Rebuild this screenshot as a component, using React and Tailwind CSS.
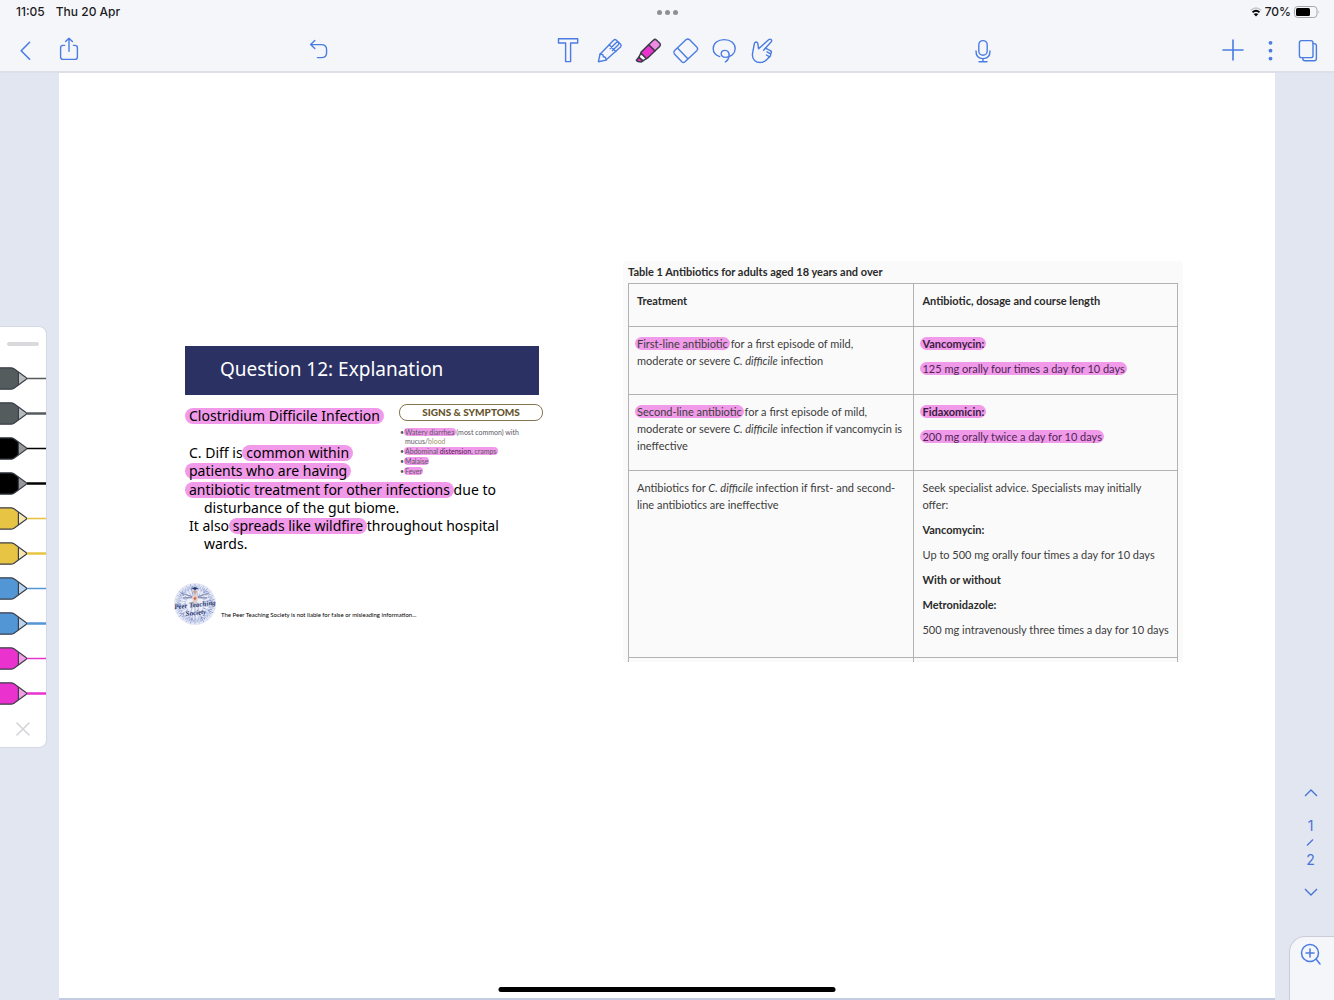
import React from 'react'
import clsx from 'clsx'

const PENS = [
  { key: 'grey-thin', label: 'Grey pen, thin', color: '#545c5e', tip: '#b9bcbd', line: 1.6 },
  { key: 'grey-thick', label: 'Grey pen, thick', color: '#545c5e', tip: '#b9bcbd', line: 2.6 },
  { key: 'black-thin', label: 'Black pen, thin', color: '#000000', tip: '#999999', line: 1.6 },
  { key: 'black-thick', label: 'Black pen, thick', color: '#000000', tip: '#999999', line: 2.6 },
  { key: 'yellow-thin', label: 'Yellow pen, thin', color: '#e8c445', tip: '#f8e8b0', line: 1.6 },
  { key: 'yellow-thick', label: 'Yellow pen, thick', color: '#e8c445', tip: '#f8e8b0', line: 2.6 },
  { key: 'blue-thin', label: 'Blue pen, thin', color: '#5296d6', tip: '#b9d5ef', line: 1.6 },
  { key: 'blue-thick', label: 'Blue pen, thick', color: '#5296d6', tip: '#b9d5ef', line: 2.6 },
  { key: 'pink-thin', label: 'Pink pen, thin', color: '#ea32cf', tip: '#f59fe6', line: 1.6 },
  { key: 'pink-thick', label: 'Pink pen, thick', color: '#ea32cf', tip: '#f59fe6', line: 2.6 },
]

const TOOLS = [
  {
    key: 'text',
    label: 'Text',
    icon: <path d="M8.5 6.7H27.7V11H20.6V29.6H15.6V11H8.5Z" />,
  },
  {
    key: 'pen',
    label: 'Pen',
    icon: (
      <>
        <path d="M9.4 29.7L11 22.3L24.6 8.2Q26 6.9 27.4 8.2L31.6 12.2Q32.8 13.5 31.5 15L17 28.1Z" />
        <path d="M11 22.3Q14.5 21.8 14.3 24.8Q17.2 24.6 17 28.1" />
        <path d="M20.2 12.8L26.8 19.4M21.2 16.4L27.4 10.4Q28.6 9.6 29.5 10.5T29.4 12.7L23.4 18.4" />
      </>
    ),
  },
  {
    key: 'highlighter',
    label: 'Highlighter',
    icon: (
      <g stroke="#3b3c48" strokeWidth="1.5">
        <path d="M20.6 12.8L25.6 8Q27 6.8 28.4 8L31.8 11.3Q33 12.7 31.8 14.2L26.9 19Z" fill="#f08be4" />
        <path d="M20.6 12.8L26.9 19L19.4 26.2Q18.4 26.8 17.5 26L13.2 21.8Q12.5 20.9 13.2 20.1Z" fill="#ea32cf" />
        <path d="M12.9 21.2L10.8 25.3L14.8 28.9L18.4 26.7Z" fill="#ffffff" />
        <path d="M10.8 25.3L8.4 28.3L10 29.6L13.4 30L14.8 28.9Z" fill="#ea32cf" />
      </g>
    ),
  },
  {
    key: 'eraser',
    label: 'Eraser',
    icon: (
      <>
        <path d="M19.2 7.6Q20.8 6.2 22.4 7.6L30 15.2Q31.3 16.8 30 18.4L18 29.8Q16.4 31.2 14.8 29.8L7.4 22Q6.1 20.4 7.4 18.8Z" />
        <path d="M10.7 16.2L20.8 26.8" />
      </>
    ),
  },
  {
    key: 'lasso',
    label: 'Lasso',
    icon: (
      <path d="M13.7 24.6C9 23.2 7.2 19.6 7.2 16.6C7.2 11 12 7.6 18.2 7.6S29.2 11 29.2 16.6C29.2 21.4 25 25.4 19.5 25.4C16.6 25.4 15.2 23.7 15.2 21.8C15.2 19.8 16.9 18.4 19 18.4C22 18.4 23.5 20.8 23 24C22.7 27 21.5 28.8 19.3 30" />
    ),
  },
  {
    key: 'hand',
    label: 'Finger mode',
    icon: (
      <>
        <path d="M20.4 16.2L26 10Q27.2 8.8 26.2 7.6Q25 6.6 23.6 7.8L13.6 16.8L12.8 11.4Q12.4 10 11 10Q9.6 10.2 9.3 11.8L7.5 21.6Q7 26 9.6 28.4Q12 30.7 16.2 30.4Q19.6 30.2 21.6 27.8L24.6 24.8" />
        <path d="M20.4 16.2L25.8 18.8M22 19.9L25.6 21.8M21.4 23L24.6 24.8" />
        <path d="M20.4 16.2L18.6 18.2M25.8 18.8Q27 20.6 25.6 21.8Q26 23.8 24.6 24.8" />
      </>
    ),
  },
]

const DOSES = {
  first: ['Vancomycin:', '125 mg orally four times a day for 10 days'],
  second: ['Fidaxomicin:', '200 mg orally twice a day for 10 days'],
}

const cellClass = 'border border-[#b2b2b2] px-2 pt-2 text-left align-top font-normal'

// highlighter stroke per text size: slide body, table cell, small print
const markClass = {
  body: '-mx-1 px-1 leading-4',
  cell: '-mx-0.5 px-0.5 leading-[13px]',
  small: '-mx-px px-px leading-2',
}

function ToolIcon({ children, width = 38 }) {
  return (
    <svg
      width={width}
      height="36"
      viewBox={`0 0 ${width} 36`}
      fill="none"
      stroke="#4a7ce2"
      strokeWidth="1.4"
      strokeLinecap="round"
      strokeLinejoin="round"
      aria-hidden="true"
    >
      {children}
    </svg>
  )
}

function IconButton({ label, width, children }) {
  return (
    <button type="button" aria-label={label} className="cursor-pointer">
      <ToolIcon width={width}>{children}</ToolIcon>
    </button>
  )
}

function StatusBar() {
  return (
    <div className="grid h-6 grid-cols-3 items-center pr-3.5 pl-4 text-xs font-medium text-[#1c1c1e]">
      <div className="flex gap-[11px]">
        <span>11:05</span>
        <span>Thu 20 Apr</span>
      </div>
      <div className="flex justify-center gap-[3px]">
        <span className="size-[5px] rounded-full bg-[#8e8f94]" />
        <span className="size-[5px] rounded-full bg-[#8e8f94]" />
        <span className="size-[5px] rounded-full bg-[#8e8f94]" />
      </div>
      <div className="flex items-center justify-end gap-[3px]">
        <svg width="12" height="10" viewBox="0 0 12 10" fill="none" aria-hidden="true">
          <path d="M0.8 3.4Q6 -1.4 11.2 3.4" stroke="#c4c5c9" strokeWidth="1.5" />
          <path d="M2.5 5.3Q6 2.2 9.5 5.3" stroke="#000" strokeWidth="1.8" />
          <path d="M6 9.5L3.7 7.1Q6 5.2 8.3 7.1Z" fill="#000" />
        </svg>
        <span>70%</span>
        <svg width="26" height="12" viewBox="0 0 26 12" fill="none" aria-hidden="true">
          <rect x="0.5" y="0.5" width="22.5" height="11" rx="3.2" stroke="#a5a6ab" />
          <rect x="2" y="2" width="14" height="8" rx="1.6" fill="#000" />
          <path d="M24.5 4.2Q26 6 24.5 7.8Z" fill="#a5a6ab" />
        </svg>
      </div>
    </div>
  )
}

function Toolbar() {
  return (
    <nav aria-label="Tools" className="flex h-[49px] items-center border-b-2 border-[#dde0e9] px-1.5 pt-[5px]">
      <div className="flex flex-1 items-center gap-1.5">
        <IconButton label="Back">
          <path d="M23.6 10.3L15.2 18.8L23.6 27.2" strokeWidth="1.6" />
        </IconButton>
        <IconButton label="Share">
          <path d="M14.6 13.4H13Q10.6 13.4 10.6 15.8V25Q10.6 27.4 13 27.4H25Q27.4 27.4 27.4 25V15.8Q27.4 13.4 25 13.4H23.4" />
          <path d="M19 19.2V6.4M15.6 9.6L19 6.2L22.4 9.6" />
        </IconButton>
        <div className="flex flex-1 justify-center pr-1.5">
          <IconButton label="Undo">
            <path d="M14.8 8.6L10.6 12.6L14.8 16.6M10.8 12.6H21.4Q26.6 12.6 26.6 17.8V20.4Q26.6 25.6 21.4 25.6H17.4" />
          </IconButton>
        </div>
      </div>
      <div className="flex">
        {TOOLS.map((tool) => (
          <IconButton key={tool.key} label={tool.label} width={39}>
            {tool.icon}
          </IconButton>
        ))}
      </div>
      <div className="flex flex-1 items-center">
        <div className="flex flex-1 justify-center pr-8">
          <IconButton label="Record audio">
            <rect x="14.8" y="8.6" width="8.4" height="14.6" rx="4.2" />
            <path d="M12 19Q12 26.6 19 26.6T26 19M19 26.6V29.8M15 29.8H23" />
          </IconButton>
        </div>
        <IconButton label="Add">
          <path d="M19 8V28M9 18H29" strokeWidth="1.6" />
        </IconButton>
        <IconButton label="More">
          <g fill="#4a7ce2" stroke="none">
            <circle cx="18.5" cy="10.8" r="1.9" />
            <circle cx="18.5" cy="18.7" r="1.9" />
            <circle cx="18.5" cy="26.6" r="1.9" />
          </g>
        </IconButton>
        <IconButton label="Pages">
          <rect x="9.4" y="8.6" width="13.6" height="17" rx="2.2" />
          <path d="M23 11.6H24.2Q26.4 11.6 26.4 13.8V26.6Q26.4 28.8 24.2 28.8H15Q12.8 28.8 12.8 26.6V25.6" />
        </IconButton>
      </div>
    </nav>
  )
}

function PenButton({ pen }) {
  return (
    <button type="button" aria-label={pen.label} className="block h-[35px] w-full cursor-pointer">
      <svg width="46" height="35" viewBox="0 0 46 35" aria-hidden="true">
        <path d="M27 17.5H46" stroke={pen.color} strokeWidth={pen.line} />
        <path d="M-2 6.8H11Q12.6 6.8 14 7.8L18.4 11V24L14 27.2Q12.6 28.2 11 28.2H-2Z" fill={pen.color} />
        <path d="M18.4 11.4L26 16.6Q27.2 17.5 26 18.4L18.4 23.6Z" fill={pen.tip} />
        <path
          d="M-2 6.8H11Q12.6 6.8 14 7.8L26 16.6Q27.2 17.5 26 18.4L14 27.2Q12.6 28.2 11 28.2H-2M18.4 11V24"
          fill="none"
          stroke="#3b3f4a"
          strokeWidth="1.2"
        />
      </svg>
    </button>
  )
}

function PenTray() {
  return (
    <aside aria-label="Pens" className="w-[47px] overflow-hidden rounded-r-lg border border-l-0 border-[#d5d9e5] bg-white">
      <div className="flex h-[34px] items-center justify-center">
        <span className="h-1 w-8 rounded-full bg-[#d9dadd]" />
      </div>
      {PENS.map((pen) => (
        <PenButton key={pen.key} pen={pen} />
      ))}
      <button type="button" aria-label="Close pens" className="flex h-9 w-full cursor-pointer items-center justify-center">
        <svg width="14" height="14" viewBox="0 0 14 14" stroke="#d3d4d8" strokeWidth="1.6" strokeLinecap="round" aria-hidden="true">
          <path d="M1 1L13 13M13 1L1 13" />
        </svg>
      </button>
    </aside>
  )
}

function PageNav() {
  return (
    <div className="flex flex-col items-center pl-3 text-sm leading-[17px] text-[#4674d6]">
      <button type="button" aria-label="Previous page" className="flex h-6 cursor-pointer items-center">
        <svg width="14" height="8" viewBox="0 0 14 8" fill="none" stroke="currentColor" strokeWidth="1.4" aria-hidden="true">
          <path d="M1 7L7 1L13 7" />
        </svg>
      </button>
      <div className="flex flex-col items-center py-3">
        <span>1</span>
        <svg width="8" height="17" viewBox="0 0 8 17" stroke="currentColor" strokeWidth="1.2" aria-hidden="true">
          <path d="M1 11.5L7 5.5" />
        </svg>
        <span>2</span>
      </div>
      <button type="button" aria-label="Next page" className="flex h-6 cursor-pointer items-center">
        <svg width="14" height="8" viewBox="0 0 14 8" fill="none" stroke="currentColor" strokeWidth="1.4" aria-hidden="true">
          <path d="M1 1L7 7L13 1" />
        </svg>
      </button>
    </div>
  )
}

function Mark({ children, size = 'body', className }) {
  return (
    <mark className={clsx('inline-block rounded-full bg-[#f09ae9] text-inherit', markClass[size], className)}>
      {children}
    </mark>
  )
}

function SocietyLogo() {
  const rays = Array.from({ length: 28 }, (_, i) => (i * 360) / 28)

  return (
    <svg width="44" height="44" viewBox="0 0 44 44" className="shrink-0" role="img" aria-label="Peer Teaching Society">
      <circle cx="22" cy="22" r="21" fill="#e4e8f5" />
      {rays.map((angle, i) => (
        <g key={angle} transform={`rotate(${angle} 22 22)`} fill="none" strokeWidth="0.7">
          <path d="M22 15V2M22 8L19.6 4.4M22 7L24.4 3.6" stroke={i % 3 ? '#a9b6de' : '#7f90c8'} />
          <path d="M20.5 11L19 8.5" stroke="#ffffff" />
        </g>
      ))}
      <circle cx="22" cy="22" r="9" fill="#eef0f8" />
      <path d="M18.5 6.5L22 5L25.5 6.5L22 8Z" fill="#2c3c78" />
      <circle cx="22" cy="9.8" r="1.9" fill="#c9a193" />
      <path d="M8 11L19 14.5H25L36 11M10 16L19 15.5M34 16L25 15.5" stroke="#8b93b8" strokeWidth="1.3" fill="none" />
      <path d="M19 13H25L24 22H20Z" fill="#e3cbc6" />
      <path d="M20 21L16 39M24 21L28 39M22 22V41" stroke="#b4c0e2" strokeWidth="1.2" fill="none" />
      <circle cx="22" cy="16.5" r="1.3" fill="#d2603f" />
      <g className="font-['Liberation_Serif',serif] font-bold italic" fill="#27356f" fontSize="7" textAnchor="middle">
        <text x="22" y="25" transform="rotate(-6 22 24)">Peer Teaching</text>
        <text x="23" y="33" transform="rotate(-6 22 32)">Society</text>
      </g>
    </svg>
  )
}

function SignsAndSymptoms() {
  return (
    <section className="mr-0.5 w-36 font-[Lato,sans-serif] text-[7px] leading-[9px] text-[#5c5866]">
      <h3 className="mb-[7px] flex h-[17px] items-center justify-center rounded-lg border border-[#85754f] text-[10px] font-black text-[#65532a]">
        SIGNS &amp; SYMPTOMS
      </h3>
      <ul className="flex flex-col gap-px">
        <li className="flex">
          <span className="w-1.5 text-center">•</span>
          <span>
            <Mark size="small" className="text-[#9c4a8c]">Watery diarrhea</Mark> (most common) with
            <br />
            mucus/<span className="text-[#a3946c]">blood</span>
          </span>
        </li>
        <li className="flex">
          <span className="w-1.5 text-center">•</span>
          <span>
            <Mark size="small" className="text-[#a34f8e]">
              Abdominal <span className="text-[#4b2350]">distension</span>, cramps
            </Mark>
          </span>
        </li>
        <li className="flex">
          <span className="w-1.5 text-center">•</span>
          <span>
            <Mark size="small" className="text-[#4b2350]">Malaise</Mark>
          </span>
        </li>
        <li className="flex">
          <span className="w-1.5 text-center">•</span>
          <span>
            <Mark size="small" className="text-[#4b2350]">Fever</Mark>
          </span>
        </li>
      </ul>
    </section>
  )
}

function Slide() {
  return (
    <article className="font-['Noto_Sans',sans-serif] text-black">
      <h1 className="ml-3 mr-[6px] flex h-[49px] items-center bg-[#2b3163] pb-0.5 pl-[35px] text-[19px] text-white">
        Question 12: Explanation
      </h1>
      <div className="ml-4 text-sm leading-[18px]">
        <div className="flex items-start justify-between pt-[9px]">
          <div className="pt-[3px] leading-[18px] whitespace-nowrap">
            <h2 className="mb-[19px]">
              <Mark>Clostridium Difficile Infection</Mark>
            </h2>
            <p>
              C. Diff is <Mark>common within</Mark>
            </p>
            <p>
              <Mark>patients who are having</Mark>
            </p>
          </div>
          <SignsAndSymptoms />
        </div>
        <p className="mt-px">
          <Mark>antibiotic treatment for other infections</Mark> due to
        </p>
        <p className="pl-[15px]">disturbance of the gut biome.</p>
        <p>
          It also <Mark>spreads like wildfire</Mark> throughout hospital
        </p>
        <p className="pl-[15px]">wards.</p>
      </div>
      <footer className="mt-[29px] flex items-center gap-1">
        <SocietyLogo />
        <small className="pt-5 font-[Lato,sans-serif] text-[6px] leading-[7px]">
          The Peer Teaching Society is not liable for false or misleading information...
        </small>
      </footer>
    </article>
  )
}

function Dose({ name, dose }) {
  return (
    <td className={cellClass}>
      <p className="mb-2 font-bold text-[#3a1c40]">
        <Mark size="cell">{name}</Mark>
      </p>
      <p className="text-[#4f2556]">
        <Mark size="cell">{dose}</Mark>
      </p>
    </td>
  )
}

function AntibioticsTable() {
  return (
    <div className="rounded bg-[#fafafa] px-[5px] font-[Lato,sans-serif] text-[11px] leading-[17px] text-[#3c3c3c]">
      <table className="w-full table-fixed border-collapse">
        <caption className="h-[22px] pt-0.5 text-left font-bold text-[#2a2a2a]">
          Table 1 Antibiotics for adults aged 18 years and over
        </caption>
        <colgroup>
          <col className="w-[52%]" />
          <col className="w-[48%]" />
        </colgroup>
        <thead>
          <tr className="h-[43px] text-[#2a2a2a]">
            <th scope="col" className={cellClass}>
              <b>Treatment</b>
            </th>
            <th scope="col" className={cellClass}>
              <b>Antibiotic, dosage and course length</b>
            </th>
          </tr>
        </thead>
        <tbody>
          <tr className="h-[68px]">
            <td className={cellClass}>
              <Mark size="cell" className="text-[#4f2556]">First-line antibiotic</Mark> for a first episode of mild,
              <br />
              moderate or severe <i>C. difficile</i> infection
            </td>
            <Dose name={DOSES.first[0]} dose={DOSES.first[1]} />
          </tr>
          <tr className="h-[76px]">
            <td className={cellClass}>
              <Mark size="cell" className="text-[#4f2556]">Second-line antibiotic</Mark> for a first episode of mild,
              <br />
              moderate or severe <i>C. difficile</i> infection if vancomycin is ineffective
            </td>
            <Dose name={DOSES.second[0]} dose={DOSES.second[1]} />
          </tr>
          <tr className="h-[187px]">
            <td className={cellClass}>
              Antibiotics for <i>C. difficile</i> infection if first- and second-line antibiotics are ineffective
            </td>
            <td className={cellClass}>
              <div className="flex flex-col gap-2">
                <p>
                  Seek specialist advice. Specialists may initially
                  <br />
                  offer:
                </p>
                <p className="font-bold text-[#2a2a2a]">Vancomycin:</p>
                <p>Up to 500 mg orally four times a day for 10 days</p>
                <p className="font-bold text-[#2a2a2a]">With or without</p>
                <p className="font-bold text-[#2a2a2a]">Metronidazole:</p>
                <p>500 mg intravenously three times a day for 10 days</p>
              </div>
            </td>
          </tr>
          <tr className="h-1">
            <td className="border-x border-[#b2b2b2]" />
            <td className="border-x border-[#b2b2b2]" />
          </tr>
        </tbody>
      </table>
    </div>
  )
}

const App = () => {
  return (
    <div className="flex min-h-screen flex-col bg-[#e2e6f1] font-[Inter,sans-serif]">
      <header className="bg-[#f5f6fa]">
        <StatusBar />
        <Toolbar />
      </header>
      <div className="flex flex-1">
        <div className="flex w-[59px] shrink-0 items-center">
          <PenTray />
        </div>
        <main className="grid flex-1 grid-cols-[372fr_560fr] items-start gap-x-[78px] border-b-2 border-[#c3cce0] bg-white pr-[92px] pl-[114px]">
          <div className="pt-[273px]">
            <Slide />
          </div>
          <div className="pt-[188px]">
            <AntibioticsTable />
          </div>
        </main>
        <div className="flex w-[59px] shrink-0 flex-col justify-end">
          <PageNav />
          <button
            type="button"
            aria-label="Zoom in"
            className="mt-8 ml-3.5 flex h-16 cursor-pointer justify-center rounded-tl-2xl border-t border-l border-[#c9cdd8] bg-[#f5f6fa] pt-1.5 pr-0.5"
          >
            <svg width="22" height="22" viewBox="0 0 22 22" fill="none" stroke="#4a7ce2" strokeWidth="1.5" strokeLinecap="round" aria-hidden="true">
              <circle cx="10" cy="10" r="8.5" />
              <path d="M6 10H14M10 6V14M16 16L20 21" />
            </svg>
          </button>
        </div>
      </div>
      <div className="fixed bottom-2 left-1/2 h-[5px] w-[337px] -translate-x-1/2 rounded-full bg-black" />
    </div>
  )
}

export default App
